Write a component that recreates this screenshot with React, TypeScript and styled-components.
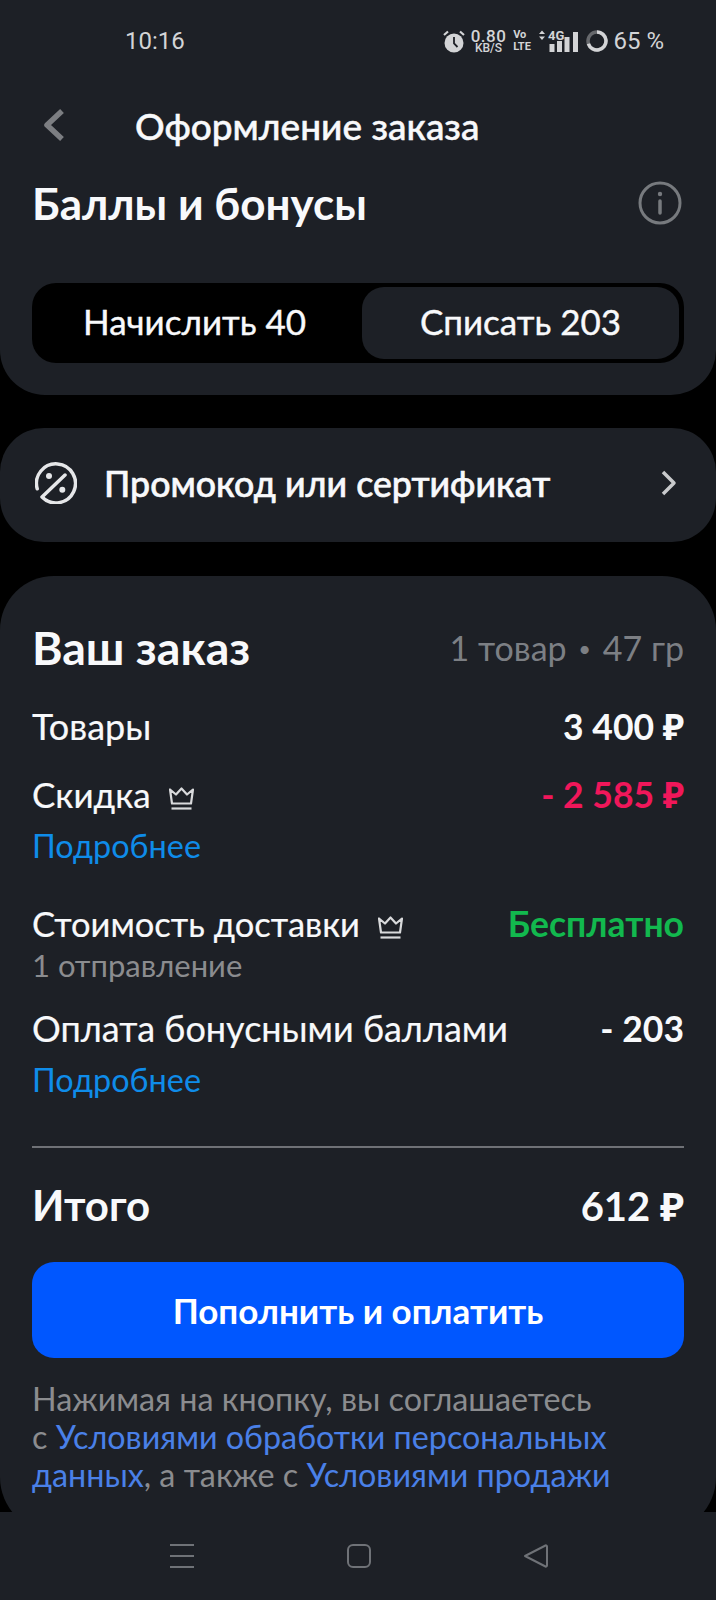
import styled, {createGlobalStyle} from 'styled-components';

const GlobalStyle = createGlobalStyle`
  html, body {
    margin: 0;
    padding: 0;
    background: #000;
  }
  * {
    box-sizing: border-box;
  }
`;

const Page = styled.div`
  width: 716px;
  height: 1600px;
  overflow: hidden;
  background: #000;
  color: #f8f9fb;
  font-family: Lato, 'Noto Sans', sans-serif;
  display: flex;
  flex-direction: column;
`;

const TopArea = styled.div`
  background: #1d2026;
  border-radius: 0 0 45px 45px;
  height: 395px;
  padding: 0 32px;
  flex: none;
`;

const StatusBar = styled.div`
  height: 82px;
  display: flex;
  align-items: center;
  justify-content: space-between;
  padding: 0 20px 0 93px;
  font-family: Roboto, sans-serif;
  color: #d3d4d6;
`;

const Clock = styled.span`
  font-size: 24px;
`;

const StatusIcons = styled.div`
  display: flex;
  align-items: center;
  gap: 6px;
`;

const NetSpeed = styled.div`
  display: flex;
  flex-direction: column;
  align-items: center;
  width: 34px;
  font-size: 17px;
  line-height: 14px;
  font-weight: 500;
  letter-spacing: 0.5px;
  small {
    font-size: 12px;
    line-height: 11px;
    letter-spacing: 0;
  }
`;

const VoLte = styled.div`
  display: flex;
  flex-direction: column;
  align-items: center;
  width: 13px;
  font-size: 11px;
  line-height: 12px;
  font-weight: 700;
  margin: 0 4px;
`;

const Battery = styled.span`
  font-size: 24px;
  margin-left: -1px;
`;

const HeaderBar = styled.div`
  height: 86px;
  display: flex;
  align-items: center;
  gap: 69px;
  padding: 0 0 0 10px;
`;

const PageTitle = styled.h1`
  margin: 0;
  font-size: 37px;
  font-weight: 500;
  -webkit-text-stroke: 0.5px currentColor;
`;

const SectionHead = styled.div`
  height: 56px;
  display: flex;
  align-items: center;
  justify-content: space-between;
  margin-top: 7px;
  padding-right: 2px;
`;

const SectionTitle = styled.h2<{$size: number}>`
  margin: 0;
  font-size: ${(p) => p.$size}px;
  font-weight: 700;
`;

const Segments = styled.div`
  margin-top: 52px;
  height: 80px;
  background: #000;
  border-radius: 24px;
  padding: 4px 5px 4px 0;
  display: grid;
  grid-template-columns: 330px 1fr;
`;

const Segment = styled.div<{$active?: boolean}>`
  display: flex;
  align-items: center;
  justify-content: center;
  font-size: 35px;
  border-radius: 22px;
  padding: 0 ${(p) => (p.$active ? 0 : 5)}px 4px 0;
  -webkit-text-stroke: 0.4px currentColor;
  background: ${(p) => (p.$active ? '#1d2026' : 'transparent')};
`;

const PromoCard = styled.div`
  margin-top: 33px;
  flex: none;
  height: 114px;
  background: #1d2026;
  border-radius: 44px;
  display: flex;
  align-items: center;
  padding: 0 38px 4px 35px;
  gap: 27px;
`;

const PromoText = styled.span`
  flex: 1;
  font-size: 35.7px;
  font-weight: 500;
  -webkit-text-stroke: 0.6px currentColor;
`;

const OrderCard = styled.div`
  margin-top: 34px;
  flex: none;
  height: 957px;
  background: #1d2026;
  border-radius: 54px 54px 56px 56px;
  padding: 0 32px;
  display: flex;
  flex-direction: column;
`;

const OrderHead = styled.div`
  height: 60px;
  margin-top: 41px;
  display: flex;
  align-items: center;
  justify-content: space-between;
`;

const Muted = styled.span`
  font-size: 34px;
  color: #7c7f84;
`;

const Bullet = styled.span`
  font-size: 22px;
  vertical-align: 4px;
  padding: 0 3px;
`;

const Row = styled.div<{$top: number}>`
  display: flex;
  align-items: center;
  justify-content: space-between;
  height: 42px;
  margin-top: ${(p) => p.$top}px;
`;

const Label = styled.span<{$size: number}>`
  font-size: ${(p) => p.$size}px;
  display: flex;
  align-items: center;
  gap: 18px;
  -webkit-text-stroke: 0.2px currentColor;
  svg {
    margin-top: 10px;
  }
`;

const Amount = styled.span<{$color?: string}>`
  font-size: 35.5px;
  font-weight: 700;
  color: ${(p) => p.$color || '#f8f9fb'};
`;

const MoreLink = styled.div`
  font-size: 32.4px;
  line-height: 40px;
  margin-top: 11px;
  color: #0f8ce9;
`;

const SubLabel = styled.div`
  font-size: 31px;
  line-height: 36px;
  margin-top: 3px;
  color: #8b8c8f;
`;

const Divider = styled.div`
  height: 2px;
  background: #6f7176;
  margin-top: 46px;
`;

const TotalRow = styled.div`
  display: flex;
  align-items: center;
  justify-content: space-between;
  height: 60px;
  margin-top: 27px;
  font-weight: 700;
`;

const TotalText = styled.span<{$size: number}>`
  font-size: ${(p) => p.$size}px;
`;

const PayButton = styled.button`
  display: block;
  width: 100%;
  height: 96px;
  margin-top: 27px;
  flex: none;
  border: 0;
  border-radius: 22px;
  background: #0057ff;
  color: #fff;
  font-family: inherit;
  font-size: 35px;
  font-weight: 700;
`;

const Legal = styled.p`
  margin: 22px 0 0;
  font-size: 32.3px;
  line-height: 38px;
  color: #8b8c8f;
  white-space: nowrap;
  a {
    color: #4a80e8;
  }
`;

const NavBar = styled.div`
  position: relative;
  margin-top: -21px;
  flex: none;
  height: 88px;
  background: #1d2026;
  display: flex;
  align-items: center;
  justify-content: space-between;
  padding: 0 167px 0 169px;
`;

const AlarmIcon = () => (
  <svg width="22" height="24" viewBox="0 0 22 24">
    <circle cx="11" cy="14" r="9.500" fill="#d3d4d6" />
    <path d="M11 8v6.500l3.500 3.500" fill="none" stroke="#1d2026" strokeWidth="1.800" />
    <path d="M1 6 5 2.500M21 6 17 2.500" fill="none" stroke="#d3d4d6" strokeWidth="2.200" />
  </svg>
);

const SignalIcon = () => (
  <svg width="40" height="24" viewBox="0 0 40 24">
    <path d="M1 5 4 1.500 7 5zM1 7.500 4 11 7 7.500z" fill="#d3d4d6" />
    <text x="10" y="11" fontFamily="Roboto, sans-serif" fontSize="13" fontWeight="700" fill="#d3d4d6">
      4G
    </text>
    <path d="M11.500 15h5v8h-5zM19 12h5v11h-5zM26.500 8h5v15h-5zM35 3h5v20h-5z" fill="#d3d4d6" />
  </svg>
);

const RingSvg = styled.svg`
  margin-left: 2px;
`;

const BatteryRing = () => (
  <RingSvg width="22" height="22" viewBox="0 0 22 22" fill="none">
    <circle cx="11" cy="11" r="9" stroke="#66686c" strokeWidth="3.500" />
    <path d="M11 2a9 9 0 1 1-8.600 11.700" stroke="#d3d4d6" strokeWidth="3.500" />
  </RingSvg>
);

const BackIcon = () => (
  <svg width="24" height="34" viewBox="0 0 24 34" fill="none">
    <path d="M20 3 5 17l15 14" stroke="#7c7e82" strokeWidth="5.500" strokeLinejoin="round" />
  </svg>
);

const InfoIcon = () => (
  <svg width="44" height="44" viewBox="0 0 44 44" fill="none">
    <circle cx="22" cy="22" r="20" stroke="#777a7e" strokeWidth="3" />
    <path d="M22 20v12" stroke="#777a7e" strokeWidth="3.500" strokeLinecap="round" />
    <circle cx="22" cy="13" r="2.200" fill="#777a7e" />
  </svg>
);

const PromoIcon = () => (
  <svg width="42" height="42" viewBox="0 0 42 42" fill="none" stroke="#e6e7e9" strokeWidth="3.500" strokeLinecap="round">
    <path d="M2.200 26.700A19.500 19.500 0 1 1 7 35L30 13" strokeLinejoin="round" />
    <circle cx="14" cy="14" r="3" fill="#e6e7e9" stroke="none" />
    <circle cx="27.300" cy="27.700" r="3" fill="#e6e7e9" stroke="none" />
  </svg>
);

const ChevronIcon = () => (
  <svg width="18" height="26" viewBox="0 0 18 26" fill="none">
    <path d="M3 2 14 13 3 24" stroke="#c9cacc" strokeWidth="3.500" strokeLinejoin="round" />
  </svg>
);

const CrownIcon = () => (
  <svg width="25" height="24" viewBox="0 0 25 24" fill="none" stroke="#d9dadc">
    <path d="M1 2.500 3 16.500h19l2-14L18 7.500 12.500 1.500 7 7.500z" strokeWidth="2.200" strokeLinejoin="round" />
    <path d="M2.500 21.500h20" strokeWidth="2.200" />
  </svg>
);

const MenuIcon = () => (
  <svg width="26" height="26" viewBox="0 0 26 26" fill="none" stroke="#6f7277" strokeWidth="2">
    <path d="M1 2h24M1 13h24M1 24h24" />
  </svg>
);

const SquareIcon = () => (
  <svg width="26" height="26" viewBox="0 0 26 26" fill="none" stroke="#6f7277" strokeWidth="2">
    <rect x="2" y="2" width="22" height="22" rx="5" />
  </svg>
);

const TriangleIcon = () => (
  <svg width="26" height="26" viewBox="0 0 26 26" fill="none" stroke="#6f7277" strokeWidth="2">
    <path d="M2 13 22.500 2.500c.600-.300 1.500 0 1.500 1v19c0 1-.900 1.300-1.500 1z" strokeLinejoin="round" />
  </svg>
);

const App = () => (
  <Page>
    <GlobalStyle />
    <TopArea>
      <StatusBar>
        <Clock>10:16</Clock>
        <StatusIcons>
          <AlarmIcon />
          <NetSpeed>
            0.80
            <small>KB/S</small>
          </NetSpeed>
          <VoLte>
            Vo
            <br />
            LTE
          </VoLte>
          <SignalIcon />
          <BatteryRing />
          <Battery>65 %</Battery>
        </StatusIcons>
      </StatusBar>
      <HeaderBar>
        <BackIcon />
        <PageTitle>Оформление заказа</PageTitle>
      </HeaderBar>
      <SectionHead>
        <SectionTitle $size={44}>Баллы и бонусы</SectionTitle>
        <InfoIcon />
      </SectionHead>
      <Segments>
        <Segment>Начислить 40</Segment>
        <Segment $active>Списать 203</Segment>
      </Segments>
    </TopArea>
    <PromoCard>
      <PromoIcon />
      <PromoText>Промокод или сертификат</PromoText>
      <ChevronIcon />
    </PromoCard>
    <OrderCard>
      <OrderHead>
        <SectionTitle $size={46.5}>Ваш заказ</SectionTitle>
        <Muted>
          1 товар <Bullet>•</Bullet> 47 гр
        </Muted>
      </OrderHead>
      <Row $top={28}>
        <Label $size={36}>Товары</Label>
        <Amount>3 400 ₽</Amount>
      </Row>
      <Row $top={26}>
        <Label $size={35}>
          Скидка <CrownIcon />
        </Label>
        <Amount $color="#f0175a">- 2 585 ₽</Amount>
      </Row>
      <MoreLink>Подробнее</MoreLink>
      <Row $top={36}>
        <Label $size={34.5}>
          Стоимость доставки <CrownIcon />
        </Label>
        <Amount $color="#12b84e">Бесплатно</Amount>
      </Row>
      <SubLabel>1 отправление</SubLabel>
      <Row $top={24}>
        <Label $size={36}>Оплата бонусными баллами</Label>
        <Amount>- 203</Amount>
      </Row>
      <MoreLink>Подробнее</MoreLink>
      <Divider />
      <TotalRow>
        <TotalText $size={42}>Итого</TotalText>
        <TotalText $size={40}>612 ₽</TotalText>
      </TotalRow>
      <PayButton>Пополнить и оплатить</PayButton>
      <Legal>
        Нажимая на кнопку, вы соглашаетесь
        <br />с <a>Условиями обработки персональных</a>
        <br />
        <a>данных</a>, а также с <a>Условиями продажи</a>
      </Legal>
    </OrderCard>
    <NavBar>
      <MenuIcon />
      <SquareIcon />
      <TriangleIcon />
    </NavBar>
  </Page>
);

export default App;
